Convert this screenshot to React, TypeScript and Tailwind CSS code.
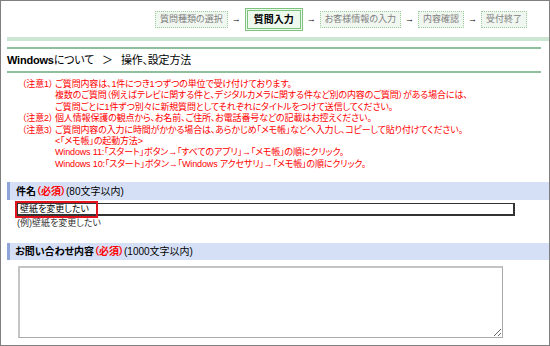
import React from "react";

const FONT = "font-['Liberation_Sans','Noto_Sans_CJK_JP',sans-serif]";

function Step({ label, active }: { label: string; active?: boolean }) {
  if (active) {
    return (
      <div className="h-[23px] px-[6px] flex items-center border-[3px] border-double border-[#7cc27c] bg-[#eef9ee] text-[10px] font-bold text-black [font-feature-settings:'palt']">
        {label}
      </div>
    );
  }
  return (
    <div className="h-[17px] px-[4px] flex items-center border border-dotted border-[#9ccb9c] bg-[#f0f7f0] text-[9px] text-[#808080] [font-feature-settings:'palt']">
      {label}
    </div>
  );
}

function Arrow() {
  return <span className="text-[9px] text-black mx-[4px]">→</span>;
}

const notes: { label?: string; text: string }[] = [
  { label: "（注意1）", text: "ご質問内容は、1件につき1つずつの単位で受け付けております。" },
  { text: "複数のご質問（例えばテレビに関する件と、デジタルカメラに関する件など別の内容のご質問）がある場合には、" },
  { text: "ご質問ごとに1件ずつ別々に新規質問としてそれぞれにタイトルをつけて送信してください。" },
  { label: "（注意2）", text: "個人情報保護の観点から、お名前、ご住所、お電話番号などの記載はお控えください。" },
  { label: "（注意3）", text: "ご質問内容の入力に時間がかかる場合は、あらかじめ「メモ帳」などへ入力し、コピーして貼り付けてください。" },
  { text: "<「メモ帳」の起動方法>" },
  { text: "Windows 11:「スタート」ボタン→「すべてのアプリ」→「メモ帳」の順にクリック。" },
  { text: "Windows 10:「スタート」ボタン→「Windows アクセサリ」→「メモ帳」の順にクリック。" },
];

export default function App() {
  return (
    <div className={`w-[550px] h-[346px] border border-[#7f7f7f] bg-white overflow-hidden ${FONT}`}>
      {/* steps */}
      <div className="h-[36px] flex items-center pl-[154px] pt-[1px]">
        <Step label="質問種類の選択" />
        <Arrow />
        <Step label="質問入力" active />
        <Arrow />
        <Step label="お客様情報の入力" />
        <Arrow />
        <Step label="内容確認" />
        <Arrow />
        <Step label="受付終了" />
      </div>

      <div className="ml-[6px]">
        <div className="h-[4px] bg-[#cde6d3]" />
        <div className="mr-[8px]">
          <div className="mt-[6px] h-[2px] bg-[#8fbf9d]" />
          <div className="h-[22px] flex items-center text-[11px] text-black [font-feature-settings:'palt'] tracking-[-0.2px]">
            <span className="font-bold">Windows</span>
            <span>について</span>
            <span className="ml-[8px] mr-[8px]">＞</span>
            <span>操作、設定方法</span>
          </div>
          <div className="h-[2px] bg-[#8fbf9d]" />
        </div>

        {/* notes */}
        <div className="pt-[6px] pl-[15px] text-[9px] leading-[11.4px] text-[#ff0000] [font-feature-settings:'palt'] tracking-[-0.15px]">
          {notes.map((n, i) => (
            <div key={i} className="flex whitespace-nowrap">
              <span className="w-[33px] shrink-0">{n.label ?? ""}</span>
              <span>{n.text}</span>
            </div>
          ))}
        </div>

        {/* subject */}
        <div className="mt-[12px] h-[18px] flex items-center bg-[#d5e0f7] border-l-[3px] border-[#8ea5da] pl-[6px] text-[10px] [font-feature-settings:'palt']">
          <span className="font-bold text-black">件名</span>
          <span className="font-bold text-[#ff0000]">（必須）</span>
          <span className="text-black">(80文字以内)</span>
        </div>
        <div className="relative ml-[10px] mt-[3px] w-[498px]">
          <div className="h-[13px] border border-[#333] border-b-[2px] border-r-[2px] bg-white flex items-center pl-[2px] text-[9px] text-black [font-feature-settings:'palt']">
            壁紙を変更したい
          </div>
          <div className="absolute left-[-2px] top-[-2px] w-[83px] h-[17px] border-[2px] border-[#e0141e]" />
        </div>
        <div className="ml-[10px] mt-[1px] text-[9px] leading-[12px] text-[#333] [font-feature-settings:'palt']">(例)壁紙を変更したい</div>

        {/* content */}
        <div className="mt-[14px] h-[17px] flex items-center bg-[#d5e0f7] border-l-[3px] border-[#8ea5da] pl-[5px] text-[10px] [font-feature-settings:'palt']">
          <span className="font-bold text-black">お問い合わせ内容</span>
          <span className="font-bold text-[#ff0000]">（必須）</span>
          <span className="text-black">(1000文字以内)</span>
        </div>
        <div className="ml-[11px] mt-[6px]">
          <textarea className="block w-[485px] h-[72px] border border-[#a9a9a9] border-t-[2px] border-l-[2px] border-t-[#c4c4c4] border-l-[#c4c4c4] bg-white resize outline-none" />
        </div>
      </div>
    </div>
  );
}
